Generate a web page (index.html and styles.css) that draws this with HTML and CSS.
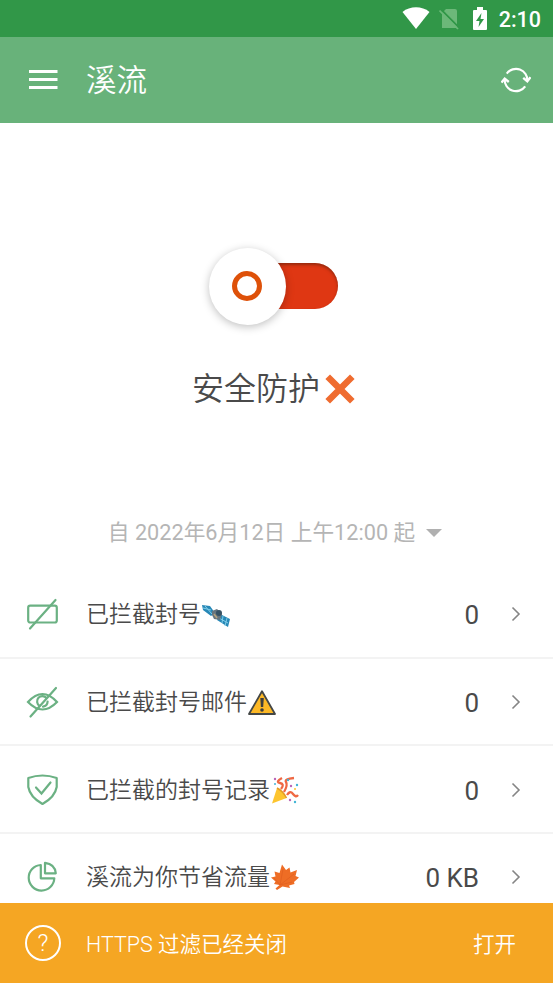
FILE: index.html
```html
<!DOCTYPE html>
<html lang="zh-CN">
<head>
<meta charset="utf-8">
<title>溪流</title>
<link rel="stylesheet" href="styles.css">
</head>
<body>
<div class="app">
  <div class="statusbar">
    <svg class="wifi" width="28" height="23" viewBox="0 0 28 23"><path d="M.5 5C8-1.200 20-1.200 27.500 5L14 22Z" fill="#fff"/></svg>
    <svg class="nosim" width="21" height="22" viewBox="0 0 21 22"><path d="M7 1h9q2 0 2 2v17H3V5Z" fill="#6cb879"/><path d="M2 1.500l19 19" stroke="#319748" stroke-width="1.800"/><path d="M.5 2.500l18.500 18.500" stroke="#6cb879" stroke-width="1.700"/></svg>
    <svg class="battery" width="14" height="24" viewBox="0 0 14 24"><path d="M4 0h6v3h3q1 0 1 1v18q0 1-1 1H1q-1 0-1-1V4q0-1 1-1h3Z" fill="#fff"/><path d="M8.500 6L3 14h3.500L5.500 20 11 12H7.500Z" fill="#319748"/></svg>
    <span class="clock">2:10</span>
  </div>
  <header class="toolbar">
    <svg class="menu" width="30" height="22" viewBox="0 0 30 22"><path d="M1 2.500h28.500M1 10.500h28.500M1 18.500h28.500" stroke="#fff" stroke-width="2.800"/></svg>
    <h1 class="title">溪流</h1>
    <svg class="refresh" width="30" height="26" viewBox="0 0 30 26" fill="none" stroke="#fff" stroke-width="2.200"><path d="M5.800 6.600A11.300 11.300 0 0 1 26.300 14M24.200 19.400A11.300 11.300 0 0 1 3.700 12"/><path d="M22.200 10.800l4.100 3.400 3.200-4M.5 15.600l3.200-4 4.100 3.400" stroke-width="2.400"/></svg>
  </header>
  <main class="hero">
    <div class="switch"><div class="knob"><div class="ring"></div></div></div>
    <div class="state"><span>安全防护</span><svg width="30" height="30" viewBox="0 0 30 30"><path d="M5 5l20 20M25 5l-20 20" stroke="#ef6c30" stroke-width="6.500" stroke-linecap="square"/></svg></div>
    <div class="since"><span>自 2022年6月12日 上午12:00 起</span><svg width="16" height="8" viewBox="0 0 16 8"><path d="M0 0h16L8 8Z" fill="#b0b0b0"/></svg></div>
  </main>
  <section class="list">
    <div class="row">
      <svg class="icon" viewBox="0 0 34 34"><rect x="2.200" y="8.700" width="28.600" height="16.800" rx="2"/><path d="M4 31.500L29.500 3"/></svg>
      <span class="label">已拦截封号</span>
      <svg class="emoji" viewBox="0 0 28 28"><path d="M0 5l8 1 5 7-4 3-8-6ZM18 14l10 5-2 8-11-7Z" fill="#2788b7"/><path d="M1 8l8 2M3 6l7 8M17 18l9 5M21 16l-1 7M25 18l-2 8" stroke="#80cde8" stroke-width="1"/><path d="M10 11l5-2 5 5-2 6-6-1-2-4Z" fill="#66757f"/><circle cx="17" cy="13" r="3" fill="#375264"/><path d="M12 14l3 4" stroke="#b5a27d" stroke-width="1.500"/></svg>
      <span class="value">0</span>
      <svg class="chevron" viewBox="0 0 10 16"><path d="M1.500 1.500L8 8l-6.500 6.500"/></svg>
    </div>
    <div class="row">
      <svg class="icon" viewBox="0 0 34 34"><path d="M2 17Q16.500 1 31 17Q16.500 32 2 17Z"/><path d="M13.500 20.800A5.300 5.300 0 1 1 20.500 13M21.600 16.500A5.300 5.300 0 0 1 17 21.600"/><path d="M4.500 31.500L30 3"/></svg>
      <span class="label">已拦截封号邮件</span>
      <svg class="emoji" viewBox="0 0 28 28"><path d="M14 3.200L27 26H1Z" fill="#fcb826" stroke="#444746" stroke-width="1.800" stroke-linejoin="round"/><path d="M12.300 10h3.500l-.6 9h-2.300Z" fill="#3d3d3d"/><circle cx="14" cy="22" r="1.800" fill="#3d3d3d"/></svg>
      <span class="value">0</span>
      <svg class="chevron" viewBox="0 0 10 16"><path d="M1.500 1.500L8 8l-6.500 6.500"/></svg>
    </div>
    <div class="row">
      <svg class="icon" viewBox="0 0 34 34"><path d="M2.300 5Q16.500 0 30.700 5V14Q29 24 16.500 31Q4 24 2.300 14Z" stroke-linejoin="round"/><path d="M10 14.500l5.500 6 9-11"/></svg>
      <span class="label">已拦截的封号记录</span>
      <svg class="emoji" viewBox="0 0 28 28"><path d="M6 12Q12 15 15.500 22L1 27.500Z" fill="#fdc52f"/><path d="M6 12Q12 15 15.500 22" stroke="#e59a24" stroke-width="1.500" fill="none"/><path d="M10 13Q14 8 9 7T11 2M13 16Q17 9 15 6T23 2M16 19Q19 14 22 18T27 19" fill="none" stroke="#ef6843" stroke-width="2.300"/><g fill="#42b5d6"><circle cx="4" cy="8" r="1"/><circle cx="17" cy="4" r="1.200"/><circle cx="26" cy="9" r="1.200"/><circle cx="24" cy="26" r="1.200"/></g><g fill="#bb65b7"><circle cx="4" cy="3" r="1.200"/><circle cx="20" cy="10" r="1.200"/><circle cx="19" cy="24" r="1.200"/></g><circle cx="24" cy="13" r="1" fill="#fdc52f"/></svg>
      <span class="value">0</span>
      <svg class="chevron" viewBox="0 0 10 16"><path d="M1.500 1.500L8 8l-6.500 6.500"/></svg>
    </div>
    <div class="row">
      <svg class="icon" viewBox="0 0 34 34"><path d="M14.800 5A12.800 12.800 0 1 0 28.300 18.300H14.800Z" stroke-linejoin="round"/><path d="M19 2.800V13.300H29.800Q29 4 19 2.800Z" stroke-linejoin="round"/></svg>
      <span class="label">溪流为你节省流量</span>
      <svg class="emoji" viewBox="0 0 28 28"><path d="M11 1.500L15 7L18.500 4.500L19.500 9.500L26 7L24.500 13L28 14.500L23 19L23.500 21L18 22.500L19 25L11.500 23.500L6 27L4.500 25.500L8.500 22L3 21L4.500 18.500L0 14.500L4.500 13.500L3.500 8.500L8.500 10Z" fill="#ee6d25"/><path d="M9 22L23 11M9 22L12 6M9 22L3 15M9 22L21 19" stroke="#e2601f" stroke-width=".8" fill="none"/></svg>
      <span class="value">0 KB</span>
      <svg class="chevron" viewBox="0 0 10 16"><path d="M1.500 1.500L8 8l-6.500 6.500"/></svg>
    </div>
  </section>
  <footer class="notice">
    <span class="help">?</span>
    <span class="message">HTTPS 过滤已经关闭</span>
    <span class="action">打开</span>
  </footer>
</div>
</body>
</html>
```
FILE: styles.css
```css
* { box-sizing: border-box; }
body { margin: 0; background: #fff; font-family: Roboto, "Noto Sans CJK SC", sans-serif; color: #4a4a4a; }
svg { display: block; flex: none; }
.app { height: 983px; display: flex; flex-direction: column; overflow: hidden; }
.statusbar { height: 37px; flex: none; background: #319748; display: flex; align-items: center; justify-content: flex-end; padding-right: 12px; color: #fff; }
.nosim { margin-left: 9px; }
.battery { margin-left: 13px; }
.clock { margin-left: 12px; font-size: 21.5px; font-weight: 500; line-height: 37px; padding-top: 1px; }
.toolbar { height: 86px; flex: none; background: #68b27a; display: flex; align-items: center; padding: 0 22px 0 28px; }
.title { margin: 0 auto 0 28px; padding-top: 2px; color: #fff; font-size: 30.5px; line-height: 40px; font-weight: 350; }
.hero { height: 447px; flex: none; display: flex; flex-direction: column; align-items: center; padding-top: 140px; }
.switch { width: 128px; height: 46px; margin-left: -5px; display: flex; align-items: center; border-radius: 23px; background: #df3713; box-shadow: inset 0 2px 3px rgba(80, 30, 10, .5); }
.knob { width: 77px; height: 77px; flex: none; margin-left: -1px; border-radius: 50%; background: #fff; box-shadow: 0 2px 8px rgba(0, 0, 0, .25); display: flex; align-items: center; justify-content: center; }
.ring { width: 30px; height: 30px; margin-right: 1px; border: 5px solid #de5109; border-radius: 50%; }
.state { display: flex; align-items: center; gap: 5px; margin: 56px 6px 0 0; height: 48px; font-size: 32px; line-height: 48px; font-weight: 350; }
.since { display: flex; align-items: center; gap: 11px; margin: 103px 3px 0 0; font-size: 21.700px; line-height: 34px; color: #b5b5b5; font-weight: 400; }
.list { flex: 1; min-height: 0; overflow: hidden; }
.row { height: 87.700px; display: flex; align-items: center; padding: 1px 32px 0 26px; border-bottom: 2px solid #f3f3f3; }
.list .row:first-child { height: 88.700px; padding-top: 2px; }
.icon { width: 34px; height: 34px; margin-right: 26px; fill: none; stroke: #6bb183; stroke-width: 2.200; stroke-linecap: round; }
.label { padding-top: 2px; font-size: 23px; line-height: 34px; font-weight: 350; }
.emoji { width: 28px; height: 28px; margin-left: 1px; }
.value { margin-left: auto; padding-top: 2px; font-size: 26px; line-height: 34px; font-weight: 400; }
.chevron { width: 10px; height: 16px; margin-left: 32px; fill: none; stroke: #858585; stroke-width: 1.600; }
.notice { height: 80px; flex: none; background: #f5a623; color: #fff; display: flex; align-items: center; padding: 0 37px 0 25px; font-size: 21.500px; font-weight: 350; }
.help { width: 36px; height: 36px; border: 2px solid #fff; border-radius: 50%; text-align: center; line-height: 33px; font-size: 24px; margin-right: 25px; }
.message, .action { padding-bottom: 2px; }
.action { margin-left: auto; }
```
